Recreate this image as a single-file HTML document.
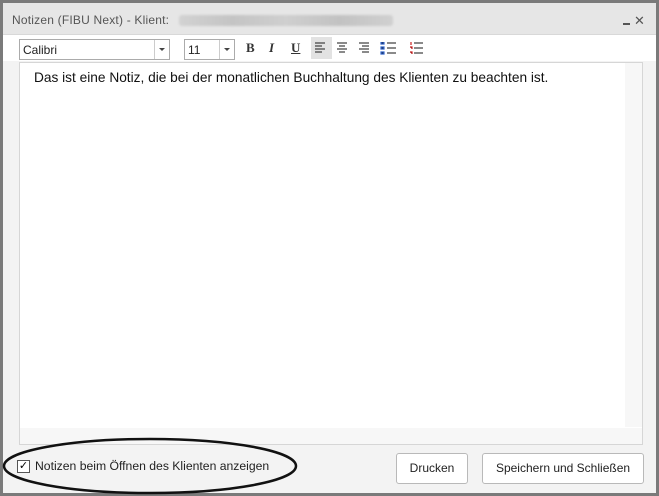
<!DOCTYPE html>
<html><head><style>
body{margin:0;width:659px;height:496px;overflow:hidden;background:#fff;font-family:"Liberation Sans",sans-serif;}
.outer{position:absolute;left:0;top:0;width:653px;height:490px;border:3px solid #7a7a7a;background:#f3f3f3;}
.title{position:absolute;left:0;top:0;width:653px;height:31px;background:#e6e6e6;border-bottom:1px solid #d8d8d8;}
.title span{position:absolute;left:9px;top:10px;font-size:12px;color:#555;letter-spacing:0.2px}
.blur{position:absolute;left:176px;top:12px;width:214px;height:11px;background:linear-gradient(90deg,#d2d2d2,#c4c4c4,#cfcfcf,#c2c2c2,#d0d0d0);border-radius:3px;filter:blur(1px);}
.tb{position:absolute;left:0;top:32px;width:653px;height:26px;background:#fff;}
.combo{position:absolute;top:4px;height:19px;border:1px solid #ababab;background:#fff;font-size:12px;color:#222;}
.combo span{position:absolute;left:3px;top:3px;}
.combo i{position:absolute;right:0;top:0;width:14px;height:19px;border-left:1px solid #ccc;}
.combo i:after{content:"";position:absolute;left:4px;top:8px;border:3px solid transparent;border-top:3px solid #444;}
.ic{position:absolute;top:5px;font-size:13px;color:#333;font-family:"Liberation Serif",serif;font-weight:bold;}
.editor{position:absolute;left:16px;top:59px;width:622px;height:381px;border:1px solid #d6d6d6;background:#fff;}
.editor .txt{position:absolute;left:14px;top:7px;font-size:13.7px;color:#111;}
.vs{position:absolute;right:0;top:0;width:17px;height:364px;background:#f7f7f7;}
.hs{position:absolute;left:0;bottom:0;width:622px;height:16px;background:#f7f7f7;}
.btn{position:absolute;top:450px;height:29px;border:1px solid #b9b9b9;border-radius:3px;background:#fff;font-size:12px;color:#222;text-align:center;line-height:29px;}
</style></head><body>
<div class="outer">
<div class="title"><span>Notizen (FIBU Next) - Klient:</span><div class="blur"></div>
<div style="position:absolute;left:620px;top:20px;width:7px;height:2px;background:#555"></div>
<div style="position:absolute;left:631px;top:10px;font-size:13px;color:#555">✕</div></div>
<div class="tb">
<div class="combo" style="left:16px;width:149px"><span>Calibri</span><i></i></div>
<div class="combo" style="left:181px;width:49px"><span>11</span><i></i></div>
<div class="ic" style="left:243px">B</div>
<div class="ic" style="left:266px;font-style:italic">I</div>
<div class="ic" style="left:288px;text-decoration:underline">U</div>
<div style="position:absolute;left:308px;top:2px;width:21px;height:22px;background:#e2e2e2"></div>
<svg style="position:absolute;left:312px;top:7px" width="120" height="14" stroke="#444" stroke-width="1.2">
<path d="M0 1h10M0 4h7M0 7h10M0 10h7"/>
<path d="M22 1h10M24 4h6M22 7h10M24 10h6"/>
<path d="M44 1h10M47 4h7M44 7h10M47 10h7"/>
<path d="M72 1h9M72 6h9M72 11h9" /><path stroke="#36c" d="M66 0h3v2h-3zM66 5h3v2h-3zM66 10h3v2h-3z"/>
<path d="M99 1h9M99 6h9M99 11h9"/><path stroke="#c22" d="M96 0v3M95 5h2v2M95 10h2v2"/>
</svg>
</div>
<div class="editor"><div class="txt">Das ist eine Notiz, die bei der monatlichen Buchhaltung des Klienten zu beachten ist.</div><div class="vs"></div><div class="hs"></div></div>
<div style="position:absolute;left:14px;top:457px;width:11px;height:11px;border:1px solid #555;background:#fff;font-size:11px;line-height:11px;text-align:center">✓</div>
<div style="position:absolute;left:32px;top:456px;font-size:12.2px;color:#222">Notizen beim Öffnen des Klienten anzeigen</div>
<div class="btn" style="left:393px;width:70px">Drucken</div>
<div class="btn" style="left:479px;width:160px">Speichern und Schließen</div>
</div>
<svg style="position:absolute;left:0;top:0" width="659" height="496"><ellipse cx="150" cy="466" rx="146" ry="27" fill="none" stroke="#111" stroke-width="2.5"/></svg>
</body></html>
